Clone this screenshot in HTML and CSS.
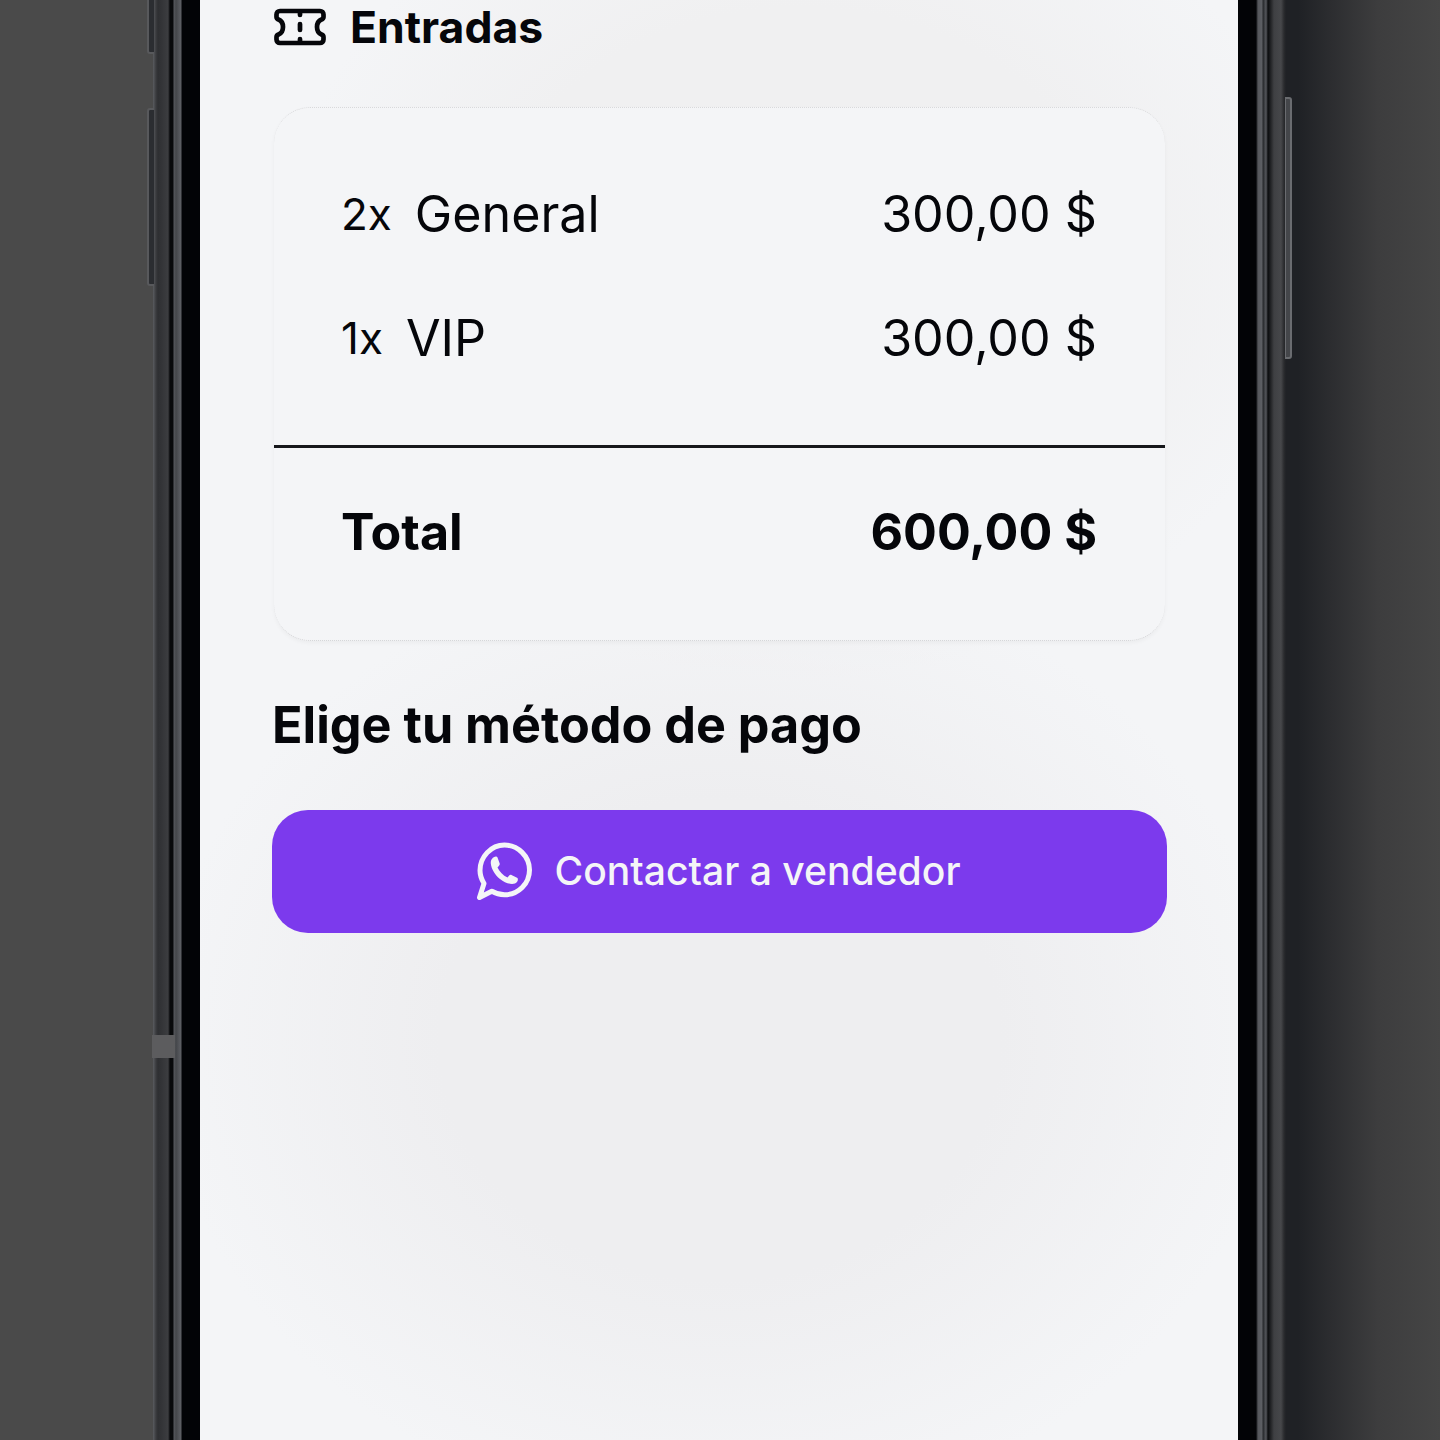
FILE: index.html
```html
<!DOCTYPE html>
<html lang="es">
<head>
  <meta charset="UTF-8">
  <meta name="viewport" content="width=device-width, initial-scale=1.0">
  <title>Entradas</title>
  <link rel="stylesheet" href="styles.css">
</head>
<body>
  <div class="stage">
    <div class="bezel-left">
      <span class="side-btn side-btn-mute"></span>
      <span class="side-btn side-btn-volume"></span>
      <span class="antenna"></span>
    </div>

    <main class="screen">
      <div class="section-title">
        <svg class="ticket-icon" viewBox="0 0 52 38" fill="none" stroke="currentColor" stroke-width="4.700" stroke-linejoin="round" stroke-linecap="round">
          <path d="M6 3H46C48 3 49.500 4.500 49.500 6.500V9C49.500 10.500 48.800 11 47.500 11.500C45 12.500 43 15.500 43 19C43 22.500 45 25.500 47.500 26.500C48.800 27 49.500 27.500 49.500 29V31.500C49.500 33.500 48 35 46 35H6C4 35 2.500 33.500 2.500 31.500V29C2.500 27.500 3.200 27 4.500 26.500C7 25.500 9 22.500 9 19C9 15.500 7 12.500 4.500 11.500C3.200 11 2.500 10.500 2.500 9V6.500C2.500 4.500 4 3 6 3Z"/>
          <path d="M26 4V7M26 16V22M26 31V34"/>
        </svg>
        <h2>Entradas</h2>
      </div>

      <section class="summary-card">
        <div class="items">
          <div class="row">
            <div class="item-name"><span class="qty">2x</span><span>General</span></div>
            <div>300,00 $</div>
          </div>
          <div class="row">
            <div class="item-name"><span class="qty">1x</span><span>VIP</span></div>
            <div>300,00 $</div>
          </div>
        </div>
        <div class="row total">
          <div>Total</div>
          <div>600,00 $</div>
        </div>
      </section>

      <h2 class="pay-title">Elige tu método de pago</h2>

      <button class="contact-btn">
        <svg class="wa-icon" viewBox="0 0 56 58" fill="none">
          <path d="M2.500 55.500L7 41.500C4.700 37.700 3 33.300 3 28.500C3 14.900 14 3 27.500 3C41 3 52.500 14.300 52.500 28C52.500 41.700 41.300 52.800 27.500 52.800C23 52.800 18.500 51.500 14.800 49.200Z" stroke="currentColor" stroke-width="5" stroke-linejoin="round"/>
          <path d="M19 14.500C15.500 15 13.500 18 13.800 21.500C14.300 27 18 33 23 37C28 41 34 43 38 41.500C40.500 40.500 41.500 38 40.500 36L34.500 33C33.500 32.600 32.800 32.800 32 33.700L30.500 35.500C26 33.500 22.500 29.800 20.500 25.500L22 23.800C22.800 22.900 23 22.200 22.600 21.200L20.500 15.500C20.300 14.900 19.800 14.500 19 14.500Z" fill="currentColor"/>
        </svg>
        <span>Contactar a vendedor</span>
      </button>
    </main>

    <div class="bezel-right">
      <span class="side-btn-power"></span>
    </div>
  </div>
</body>
</html>
```

FILE: styles.css
```css
* {
  box-sizing: border-box;
}

html, body {
  margin: 0;
  height: 100%;
}

body {
  font-family: Inter, "Liberation Sans", sans-serif;
  color: #05060a;
  background-color: #444;
}

.stage {
  display: flex;
  width: 1440px;
  height: 1440px;
  overflow: hidden;
}

/* phone frame, left and right of the screen */
.bezel-left {
  position: relative;
  width: 200px;
  flex-shrink: 0;
  background: linear-gradient(90deg,
    #4a4a4a 0, #4a4a4a 153px,
    #5a5c60 153px, #3a3b3e 156px,
    #2e2f32 158px, #3c3d40 168px,
    #08090b 170px, #08090b 173px,
    #55575c 174px, #44464a 176px, #5d5f64 181px,
    #020306 182px, #020306 200px);
}

.side-btn {
  position: absolute;
  left: 147px;
  width: 7px;
  background-color: #2b2d31;
  border: 2px solid #58595c;
  border-right: none;
  border-radius: 3px 0 0 3px;
}

.side-btn-mute {
  top: -10px;
  height: 64px;
}

.side-btn-volume {
  top: 108px;
  height: 178px;
}

.antenna {
  position: absolute;
  left: 152px;
  top: 1035px;
  width: 23px;
  height: 23px;
  background-color: #5c5c5e;
}

.bezel-right {
  position: relative;
  flex: 1;
  background: linear-gradient(90deg,
    #020306 0, #020306 18px,
    #55575c 20px, #5d5f64 24px, #26282b 25px, #55575c 28px,
    #0b0c0e 30px, #3f4043 36px, #46474a 43px, #2a2b2e 46px,
    #1f2125 48px, #1f2125 60px, #2b2c2f 90px, #3d3d3e 140px, #454545 202px);
}

.side-btn-power {
  position: absolute;
  left: 47px;
  top: 97px;
  width: 7px;
  height: 262px;
  background-color: #44464a;
  border: 2px solid #6a6c70;
  border-left-width: 1px;
  border-radius: 0 3px 3px 0;
}

.screen {
  width: 1038px;
  flex-shrink: 0;
  padding: 0 71px 0 72px;
  background:
    radial-gradient(ellipse 560px 480px at 520px 1040px, #eeeef0 50%, rgba(238, 238, 240, 0) 100%),
    radial-gradient(ellipse 520px 420px at 600px 260px, #f0f0f1 60%, rgba(240, 240, 241, 0) 100%),
    #f4f5f7;
}

.section-title {
  display: flex;
  align-items: center;
  gap: 24px;
  height: 54px;
  padding-left: 2px;
}

.ticket-icon {
  width: 52px;
  height: 38px;
}

.section-title h2 {
  margin: 0;
  font-size: 44.500px;
  font-weight: 700;
}

.summary-card {
  margin: 53px 0 0 2px;
  width: 891px;
  height: 534px;
  background-color: #f4f5f7;
  border-top: 1px dotted #d9d9db;
  border-bottom: 1px dotted #d4d4d6;
  border-radius: 36px;
  box-shadow: 0 2px 4px rgba(0, 0, 0, 0.04);
}

.items {
  display: flex;
  flex-direction: column;
  gap: 66px;
  height: 340px;
  padding-top: 77px;
  border-bottom: 3px solid #16171b;
}

.row {
  display: flex;
  justify-content: space-between;
  align-items: center;
  padding: 0 68px 0 67px;
  height: 58px;
  font-size: 50.200px;
  line-height: 58px;
}

.item-name {
  display: flex;
  gap: 23px;
}

.qty {
  font-size: 44px;
}

.total {
  margin-top: 55px;
  font-weight: 700;
}

.pay-title {
  margin: 55px 0 0;
  font-size: 50.300px;
  line-height: 58px;
  font-weight: 700;
}

.contact-btn {
  display: flex;
  align-items: center;
  justify-content: center;
  gap: 22px;
  width: 895px;
  height: 123px;
  margin-top: 56px;
  padding: 0 2px 2px 0;
  border: none;
  border-radius: 36px;
  background-color: #7c3aed;
  color: #f4f5f7;
  font-family: inherit;
  font-size: 39.100px;
  font-weight: 500;
}

.wa-icon {
  width: 56px;
  height: 58px;
}
```
